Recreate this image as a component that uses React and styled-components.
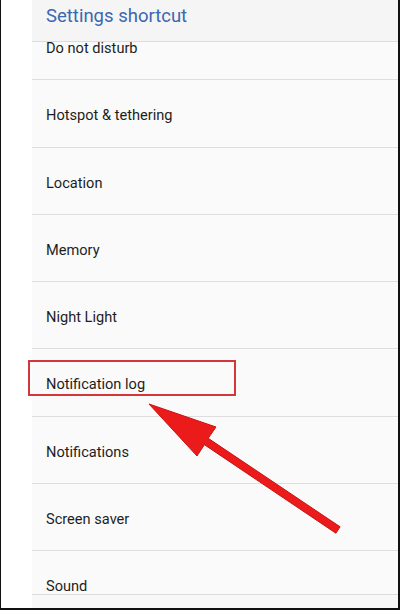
import styled, { createGlobalStyle } from "styled-components";

const GlobalStyle = createGlobalStyle`
  html, body {
    margin: 0;
    padding: 0;
    background: #ffffff;
    font-family: Roboto, "Liberation Sans", sans-serif;
  }
`;

const items = [
  "Do not disturb",
  "Hotspot & tethering",
  "Location",
  "Memory",
  "Night Light",
  "Notification log",
  "Notifications",
  "Screen saver",
  "Sound",
];

export default function App() {
  return (
    <>
      <GlobalStyle />
      <Frame>
        <Gutter />
        <Panel>
          <Header>Settings shortcut</Header>
          <List>
            <Scroller>
              {items.map((label) => (
                <Row key={label}>{label}</Row>
              ))}
            </Scroller>
          </List>
          <Footer />
        </Panel>
        <Highlight />
        <Arrow viewBox="0 0 400 610" width="400" height="610">
          <polygon
            points="149,404 216,427 208.2,438.3 340.1,526.8 335.9,533.2 204.4,444.7 197,456"
            fill="#ec1b1b"
            stroke="#c91313"
            strokeWidth="1"
            strokeLinejoin="round"
          />
        </Arrow>
      </Frame>
    </>
  );
}

const Frame = styled.div`
  position: relative;
  display: flex;
  width: 400px;
  height: 610px;
  box-sizing: border-box;
  border-left: 1px solid #111;
  border-right: 2px solid #111;
  border-bottom: 2px solid #111;
  overflow: hidden;
`;

const Gutter = styled.div`
  width: 31px;
  flex-shrink: 0;
  background: #ffffff;
`;

const Panel = styled.div`
  flex: 1;
  display: flex;
  flex-direction: column;
  background: #fafafa;
`;

const Header = styled.div`
  height: 42px;
  flex-shrink: 0;
  box-sizing: border-box;
  padding: 5px 0 0 14px;
  font-size: 18.5px;
  color: #3c67b1;
  background: #f5f5f5;
  border-bottom: 1.5px solid #dcdcdc;
  position: relative;
  z-index: 1;
`;

const List = styled.div`
  flex: 1;
  overflow: hidden;
  border-bottom: 1.5px solid #dcdcdc;
`;

const Scroller = styled.div`
  margin-top: -29px;
`;

const Row = styled.div`
  height: 67.25px;
  box-sizing: border-box;
  display: flex;
  align-items: center;
  padding: 4px 0 0 14px;
  font-size: 14.6px;
  color: #1e1e1e;
  border-bottom: 1.5px solid #dedede;
`;

const Footer = styled.div`
  height: 13px;
  flex-shrink: 0;
  background: #f8f8f8;
`;

const Highlight = styled.div`
  position: absolute;
  left: 27px;
  top: 360px;
  width: 208px;
  height: 36px;
  box-sizing: border-box;
  border: 2px solid #d4373b;
`;

const Arrow = styled.svg`
  position: absolute;
  left: -1px;
  top: 0;
  pointer-events: none;
`;
